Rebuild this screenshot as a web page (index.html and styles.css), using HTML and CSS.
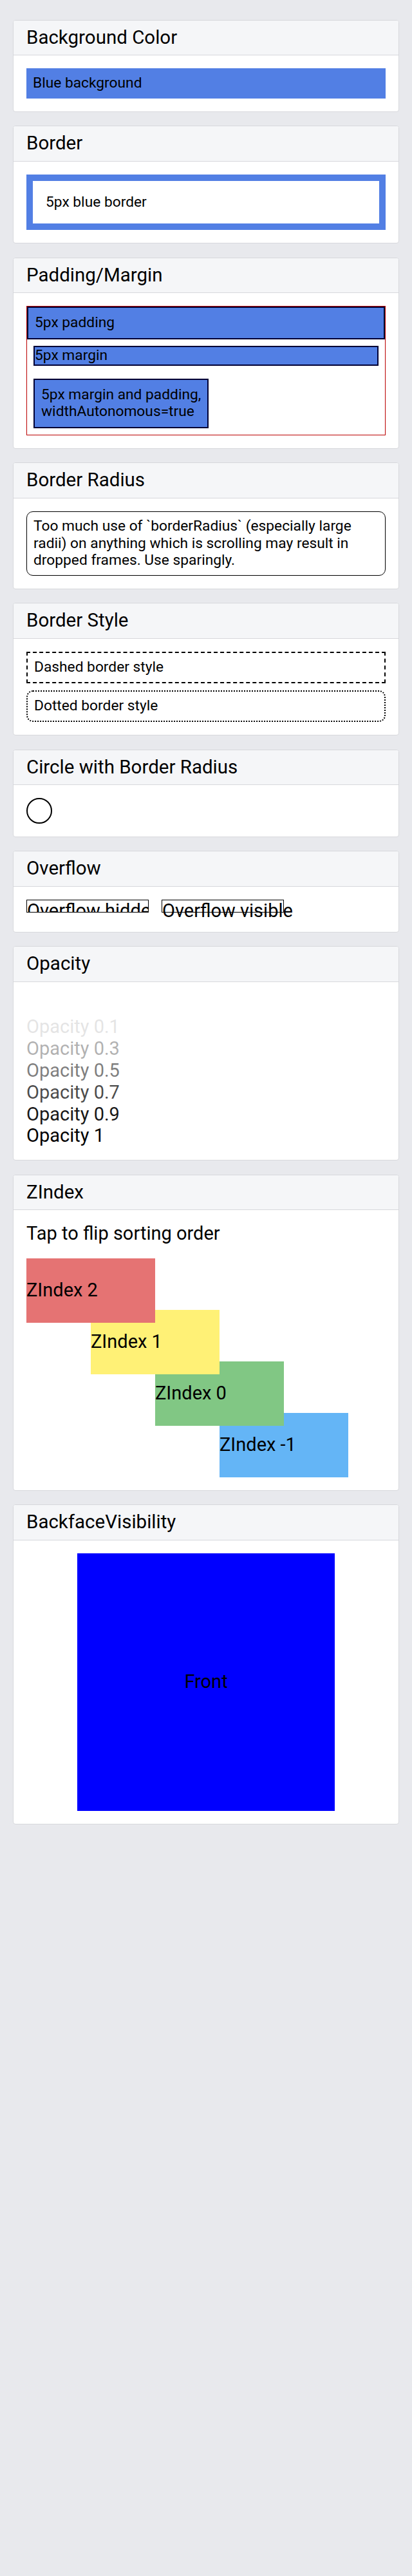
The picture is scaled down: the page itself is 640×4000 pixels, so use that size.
FILE: index.html
```html
<!DOCTYPE html>
<html lang="en">
<head>
<meta charset="utf-8">
<title>View</title>
<link rel="stylesheet" href="styles.css">
</head>
<body>
<div class="page">
  <section class="card">
    <div class="card-head"><h2 class="card-title">Background Color</h2></div>
    <div class="card-body">
      <div class="bg-box"><span class="sm">Blue background</span></div>
    </div>
  </section>

  <section class="card">
    <div class="card-head"><h2 class="card-title">Border</h2></div>
    <div class="card-body">
      <div class="border-box"><span class="sm">5px blue border</span></div>
    </div>
  </section>

  <section class="card">
    <div class="card-head"><h2 class="card-title">Padding/Margin</h2></div>
    <div class="card-body">
      <div class="pm-outer">
        <div class="pm-box pad"><span class="sm">5px padding</span></div>
        <div class="pm-box mar"><span class="sm">5px margin</span></div>
        <div class="pm-box mar pad auto"><span class="sm">5px margin and padding,<br>widthAutonomous=true</span></div>
      </div>
    </div>
  </section>

  <section class="card">
    <div class="card-head"><h2 class="card-title">Border Radius</h2></div>
    <div class="card-body">
      <div class="radius-box"><p class="sm para">Too much use of `borderRadius` (especially large radii) on anything which is scrolling may result in dropped frames. Use sparingly.</p></div>
    </div>
  </section>

  <section class="card">
    <div class="card-head"><h2 class="card-title">Border Style</h2></div>
    <div class="card-body">
      <div class="dashed"><span class="sm">Dashed border style</span></div>
      <div class="dotted"><span class="sm">Dotted border style</span></div>
    </div>
  </section>

  <section class="card">
    <div class="card-head"><h2 class="card-title">Circle with Border Radius</h2></div>
    <div class="card-body">
      <div class="circle"></div>
    </div>
  </section>

  <section class="card">
    <div class="card-head"><h2 class="card-title">Overflow</h2></div>
    <div class="card-body">
      <div class="ov-row">
        <div class="ov-box ov-hidden"><span class="lg nowrap">Overflow hidden</span></div>
        <div class="ov-box"><span class="lg nowrap">Overflow visible</span></div>
      </div>
    </div>
  </section>

  <section class="card">
    <div class="card-head"><h2 class="card-title">Opacity</h2></div>
    <div class="card-body opacity-list">
      <div class="lg op0">Opacity 0</div>
      <div class="lg op1">Opacity 0.1</div>
      <div class="lg op3">Opacity 0.3</div>
      <div class="lg op5">Opacity 0.5</div>
      <div class="lg op7">Opacity 0.7</div>
      <div class="lg op9">Opacity 0.9</div>
      <div class="lg">Opacity 1</div>
    </div>
  </section>

  <section class="card">
    <div class="card-head"><h2 class="card-title">ZIndex</h2></div>
    <div class="card-body">
      <div class="lg tap">Tap to flip sorting order</div>
      <div class="zstack">
        <div class="zbox z-red"><span class="lg">ZIndex 2</span></div>
        <div class="zbox z-yellow"><span class="lg">ZIndex 1</span></div>
        <div class="zbox z-green"><span class="lg">ZIndex 0</span></div>
        <div class="zbox z-blue"><span class="lg">ZIndex -1</span></div>
      </div>
    </div>
  </section>

  <section class="card">
    <div class="card-head"><h2 class="card-title">BackfaceVisibility</h2></div>
    <div class="card-body">
      <div class="flip-wrap">
        <div class="flip"><span class="lg">Front</span></div>
      </div>
    </div>
  </section>
</div>
</body>
</html>
```

FILE: styles.css
```css
* {
  box-sizing: border-box;
}

body {
  margin: 0;
  background: #e8e9ed;
  font-family: Roboto, "Noto Sans", "Liberation Sans", sans-serif;
  color: #000;
}

.page {
  display: flex;
  flex-direction: column;
  gap: 21.3px;
  padding: 30.7px 20px 40px;
}

.card {
  background: #fff;
  border: 1px solid #d7d8dc;
  border-radius: 4px;
  overflow: hidden;
}

.card-head {
  background: #f5f6f8;
  border-bottom: 1px solid #d7d8dc;
  padding: 10px 20px;
}

.card-title {
  margin: 0;
  font-size: 29.5px;
  font-weight: 400;
  line-height: 33.5px;
}

.card-body {
  padding: 20px;
}

.sm {
  font-size: 22.75px;
  line-height: 26.7px;
}

.lg {
  font-size: 29px;
  line-height: 33.8px;
}

.nowrap {
  white-space: nowrap;
}

.para {
  margin: 0;
}

/* Background */
.bg-box {
  background: #527fe4;
  padding: 10px;
  display: flex;
}

/* Border */
.border-box {
  border: 10px solid #527fe4;
  padding: 20px;
  display: flex;
}

/* Padding / Margin */
.pm-outer {
  border: 1px solid #bb0000;
  display: flex;
  flex-direction: column;
}

.pm-box {
  background: #527fe4;
  border: 2px solid #000033;
  display: flex;
}

.pad {
  padding: 10px;
}

.mar {
  margin: 10px;
}

.auto {
  align-self: flex-start;
}

/* Border radius */
.radius-box {
  border: 1px solid #000;
  border-radius: 10px;
  padding: 9px 10px;
}

/* Border style */
.dashed {
  border: 2px dashed #000;
  padding: 9.3px 10px;
  display: flex;
}

.dotted {
  border: 2px dotted #000;
  border-radius: 10px;
  padding: 9.3px 10px;
  margin-top: 11px;
  display: flex;
}

/* Circle */
.circle {
  width: 40px;
  height: 40px;
  border: 2px solid #000;
  border-radius: 50%;
}

/* Overflow */
.ov-row {
  display: flex;
  gap: 20px;
}

.ov-box {
  width: 190px;
  height: 20px;
  border: 1px solid #000;
  margin-bottom: 10px;
}

.ov-hidden {
  overflow: hidden;
}

/* Opacity */
.op0 { opacity: 0; }
.op1 { opacity: 0.1; }
.op3 { opacity: 0.3; }
.op5 { opacity: 0.5; }
.op7 { opacity: 0.7; }
.op9 { opacity: 0.9; }

/* ZIndex */
.tap {
  margin-bottom: 21px;
}

.zstack {
  display: flex;
  flex-direction: column;
  isolation: isolate;
}

.zbox {
  width: 200px;
  height: 100px;
  display: flex;
  align-items: center;
}

.zbox + .zbox {
  margin-top: -20px;
}

.z-red {
  background: #e57373;
  z-index: 2;
}

.z-yellow {
  background: #fff176;
  margin-left: 100px;
  z-index: 1;
}

.z-green {
  background: #81c784;
  margin-left: 200px;
  z-index: 0;
}

.z-blue {
  background: #64b5f6;
  margin-left: 300px;
  z-index: -1;
}

/* Backface */
.flip-wrap {
  display: flex;
  justify-content: center;
}

.flip {
  width: 400px;
  height: 400px;
  background: #0000ff;
  display: flex;
  align-items: center;
  justify-content: center;
}
```
